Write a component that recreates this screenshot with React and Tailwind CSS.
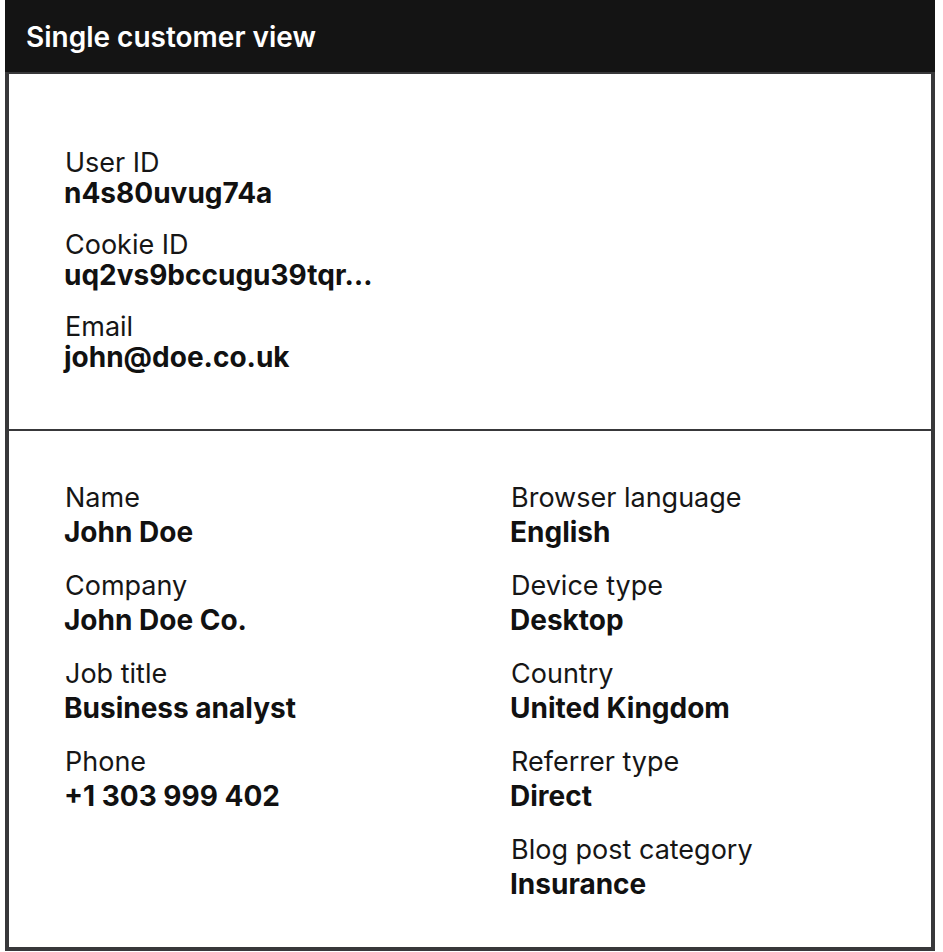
const topFields = [
  { label: 'User ID', value: 'n4s80uvug74a' },
  { label: 'Cookie ID', value: 'uq2vs9bccugu39tqr…' },
  { label: 'Email', value: 'john@doe.co.uk' },
]

const leftFields = [
  { label: 'Name', value: 'John Doe' },
  { label: 'Company', value: 'John Doe Co.' },
  { label: 'Job title', value: 'Business analyst' },
  { label: 'Phone', value: '+1 303 999 402' },
]

const rightFields = [
  { label: 'Browser language', value: 'English' },
  { label: 'Device type', value: 'Desktop' },
  { label: 'Country', value: 'United Kingdom' },
  { label: 'Referrer type', value: 'Direct' },
  { label: 'Blog post category', value: 'Insurance' },
]

function Field({ label, value, wide }) {
  return (
    <div className="flex flex-col">
      <span className={`pl-px text-[27px] text-[#161616] ${wide ? 'leading-[38px]' : 'leading-[30px]'}`}>
        {label}
      </span>
      <span className="text-[28px] font-bold leading-[30px] text-[#111]">{value}</span>
    </div>
  )
}

export default function App() {
  return (
    <div className="min-h-screen bg-white font-['Inter','Liberation_Sans',sans-serif]">
      <div className="ml-[5px] w-[930px]">
        <header className="flex h-[72px] items-center bg-[#141414] px-[21px] pt-[2px]">
          <h1 className="text-[28px] font-semibold text-white">Single customer view</h1>
        </header>

        <div className="border-x-4 border-t-2 border-b-4 border-[#38383a]">
          <section className="flex flex-col gap-[22px] border-b-2 border-[#38383a] pl-[55px] pt-[74px] pb-[57px]">
            {topFields.map((f) => (
              <Field key={f.label} {...f} />
            ))}
          </section>

          <section className="grid grid-cols-[446px_1fr] pl-[55px] pt-[48px] pb-[48px]">
            <div className="flex flex-col gap-[20px]">
              {leftFields.map((f) => (
                <Field key={f.label} wide {...f} />
              ))}
            </div>
            <div className="flex flex-col gap-[20px]">
              {rightFields.map((f) => (
                <Field key={f.label} wide {...f} />
              ))}
            </div>
          </section>
        </div>
      </div>
    </div>
  )
}
